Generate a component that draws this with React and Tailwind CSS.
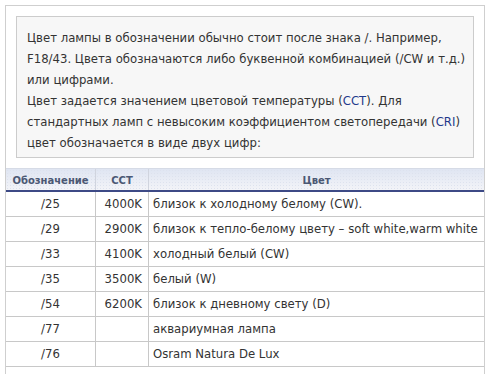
import React from "react";

const rows = [
  ["/25", "4000K", "близок к холодному белому (CW)."],
  ["/29", "2900K", "близок к тепло-белому цвету – soft white,warm white"],
  ["/33", "4100K", "холодный белый (CW)"],
  ["/35", "3500K", "белый (W)"],
  ["/54", "6200K", "близок к дневному свету (D)"],
  ["/77", "", "аквариумная лампа"],
  ["/76", "", "Osram Natura De Lux"],
];

export default function App() {
  return (
    <div
      className="w-[491px] h-[374px] bg-white overflow-hidden pt-[5px] pl-[5px]"
      style={{ fontFamily: '"DejaVu Sans", Verdana, sans-serif' }}
    >
      <div className="w-[480px] h-[380px] border-t border-l border-r border-[#cfcfcf]">
        <div className="p-[10px]">
          <div className="w-[458px] h-[142px] border border-[#cccccc] bg-[#f7f7f7] pl-[10px] pt-[11px] text-[11.7px] leading-[21px] text-[#333333] whitespace-nowrap">
            Цвет лампы в обозначении обычно стоит после знака /. Например,
            <br />
            F18/43. Цвета обозначаются либо буквенной комбинацией (/CW и т.д.)
            <br />
            или цифрами.
            <br />
            Цвет задается значением цветовой температуры (<span className="text-[#1f3a8c]">CCT</span>). Для
            <br />
            стандартных ламп с невысоким коэффициентом светопередачи (<span className="text-[#1f3a8c]">CRI</span>)
            <br />
            цвет обозначается в виде двух цифр:
          </div>
        </div>
        <div
          className="flex h-[24px] border-t border-[#d6dbe6] border-b-2 border-b-[#3d4a86] text-[10px] font-bold text-[#4b5874]"
          style={{
            backgroundColor: "#eef0f6",
            backgroundImage:
              "radial-gradient(circle, #dde2ee 0.7px, transparent 0.8px), linear-gradient(#dfe5f2, #f3f4f8)",
            backgroundSize: "3px 3px, 100% 100%",
          }}
        >
          <div className="w-[90px] shrink-0 flex items-center justify-center pt-[1px] border-r border-[#d0d4de]">
            Обозначение
          </div>
          <div className="w-[53px] shrink-0 flex items-center justify-center pt-[1px] border-r border-[#d0d4de]">
            CCT
          </div>
          <div className="flex-1 flex items-center justify-center pt-[1px]">Цвет</div>
        </div>
        {rows.map((r, i) => (
          <div
            key={i}
            className="flex h-[25px] border-b border-[#c8c8c8] text-[11.7px] text-[#333333] whitespace-nowrap"
          >
            <div className="w-[90px] shrink-0 flex items-center justify-center pt-[2px] border-r border-[#c8c8c8]">
              {r[0]}
            </div>
            <div className="w-[53px] shrink-0 flex items-center justify-end pr-[6px] pt-[2px] border-r border-[#c8c8c8]">
              {r[1]}
            </div>
            <div className="flex-1 min-w-0 overflow-hidden flex items-center pl-[4px] pt-[2px]">{r[2]}</div>
          </div>
        ))}
      </div>
    </div>
  );
}
